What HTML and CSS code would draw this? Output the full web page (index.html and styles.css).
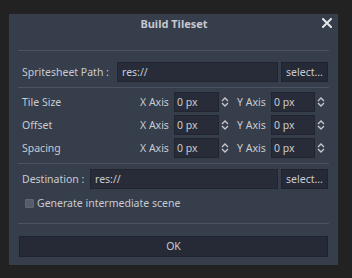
FILE: index.html
```html
<!DOCTYPE html>
<html>
<head>
<meta charset="utf-8">
<link rel="stylesheet" href="styles.css">
</head>
<body>
<div class="dialog">
  <div class="titlebar">
    <span class="title">Build Tileset</span>
    <svg class="close" width="10" height="10" viewBox="0 0 10 10"><path d="M1 1L9 9M9 1L1 9" stroke="#e3e5e8" stroke-width="2" stroke-linecap="square"/></svg>
  </div>
  <div class="content">
    <div class="sep"></div>
    <div class="pathrow r1">
      <span class="lbl">Spritesheet Path :</span>
      <div class="input path1">res://</div>
      <div class="btn">select...</div>
    </div>
    <div class="sep s2"></div>
    <div class="grid">
      <span class="lbl">Tile Size</span>
      <span class="ax">X Axis</span><div class="spin">0 px</div><svg class="arr" width="8" height="10" viewBox="0 0 8 10"><path d="M1 4L4 1L7 4M1 6L4 9L7 6" fill="none" stroke="#c5c8cd" stroke-width="1.4"/></svg>
      <span class="ax">Y Axis</span><div class="spin">0 px</div><svg class="arr" width="8" height="10" viewBox="0 0 8 10"><path d="M1 4L4 1L7 4M1 6L4 9L7 6" fill="none" stroke="#c5c8cd" stroke-width="1.4"/></svg>
      <span class="lbl">Offset</span>
      <span class="ax">X Axis</span><div class="spin">0 px</div><svg class="arr" width="8" height="10" viewBox="0 0 8 10"><path d="M1 4L4 1L7 4M1 6L4 9L7 6" fill="none" stroke="#c5c8cd" stroke-width="1.4"/></svg>
      <span class="ax">Y Axis</span><div class="spin">0 px</div><svg class="arr" width="8" height="10" viewBox="0 0 8 10"><path d="M1 4L4 1L7 4M1 6L4 9L7 6" fill="none" stroke="#c5c8cd" stroke-width="1.4"/></svg>
      <span class="lbl">Spacing</span>
      <span class="ax">X Axis</span><div class="spin">0 px</div><svg class="arr" width="8" height="10" viewBox="0 0 8 10"><path d="M1 4L4 1L7 4M1 6L4 9L7 6" fill="none" stroke="#c5c8cd" stroke-width="1.4"/></svg>
      <span class="ax">Y Axis</span><div class="spin">0 px</div><svg class="arr" width="8" height="10" viewBox="0 0 8 10"><path d="M1 4L4 1L7 4M1 6L4 9L7 6" fill="none" stroke="#c5c8cd" stroke-width="1.4"/></svg>
    </div>
    <div class="sep s3"></div>
    <div class="pathrow r2">
      <span class="lbl">Destination :</span>
      <div class="input path2">res://</div>
      <div class="btn">select...</div>
    </div>
    <div class="checkrow">
      <span class="box"></span>
      <span class="lbl">Generate intermediate scene</span>
    </div>
    <div class="sep s4"></div>
    <div class="ok">OK</div>
  </div>
</div>
</body>
</html>
```

FILE: styles.css
```css
html, body {
  margin: 0;
  padding: 0;
  background: #222222;
  width: 352px;
  height: 278px;
  overflow: hidden;
}
body {
  font-family: "Noto Sans", "DejaVu Sans", sans-serif;
  font-size: 10.5px;
  color: #c8cbd0;
}
.dialog {
  position: absolute;
  left: 9px;
  top: 14px;
  width: 329px;
  height: 251px;
  background: #363d4b;
  box-sizing: border-box;
}
.titlebar {
  height: 19px;
  display: flex;
  align-items: center;
  justify-content: center;
  position: relative;
}
.title {
  font-weight: bold;
  color: #c5c8ce;
  font-size: 11px;
  margin-left: 1px;
}
.close {
  position: absolute;
  right: 6px;
  top: 4px;
}
.content {
  padding: 0 9px;
  display: flex;
  flex-direction: column;
}
.sep {
  height: 1px;
  background: #4b5262;
  margin-top: 17px;
}
.pathrow {
  display: flex;
  align-items: center;
  height: 20px;
  margin-top: 11px;
}
.lbl {
  padding-left: 4px;
  white-space: nowrap;
}
.r1 .lbl { width: 95px; flex: none; }
.r2 .lbl { width: 68px; flex: none; }
.input {
  height: 20px;
  box-sizing: border-box;
  background: #282c38;
  border: 1px solid #21252f;
  padding-left: 4px;
  line-height: 18px;
  color: #c8cbd0;
}
.path1 { width: 161px; }
.path2 { width: 188px; }
.btn {
  margin-left: 3px;
  width: 47px;
  height: 20px;
  box-sizing: border-box;
  background: #262a36;
  border: 1px solid #1f232d;
  line-height: 18px;
  text-align: center;
  color: #c8cbd0;
}
.s2 { margin-top: 5px; }
.grid {
  display: grid;
  grid-template-columns: 122px 34px 45px 18px 34px 44px 13px;
  grid-auto-rows: 20px;
  row-gap: 3px;
  margin-top: 4px;
  align-items: center;
}
.ax {
  white-space: nowrap;
}
.spin {
  height: 20px;
  box-sizing: border-box;
  background: #282c38;
  border: 1px solid #21252f;
  padding-left: 2px;
  line-height: 18px;
}
.arr {
  margin-left: 2px;
}
.s3 { margin-top: 5px; }
.r2 { margin-top: 5px; }
.checkrow {
  display: flex;
  align-items: center;
  height: 20px;
  margin-top: 4px;
}
.box {
  width: 9px;
  height: 9px;
  margin-left: 7px;
  box-sizing: border-box;
  background: #565c68;
  border: 1px solid #60656f;
  border-radius: 1px;
}
.checkrow .lbl {
  padding-left: 3px;
}
.s4 { margin-top: 10px; }
.ok {
  margin-top: 12px;
  height: 21px;
  margin-left: 1px;
  margin-right: 1px;
  box-sizing: border-box;
  background: #262a36;
  border: 1px solid #1f232d;
  line-height: 19px;
  text-align: center;
}
```
